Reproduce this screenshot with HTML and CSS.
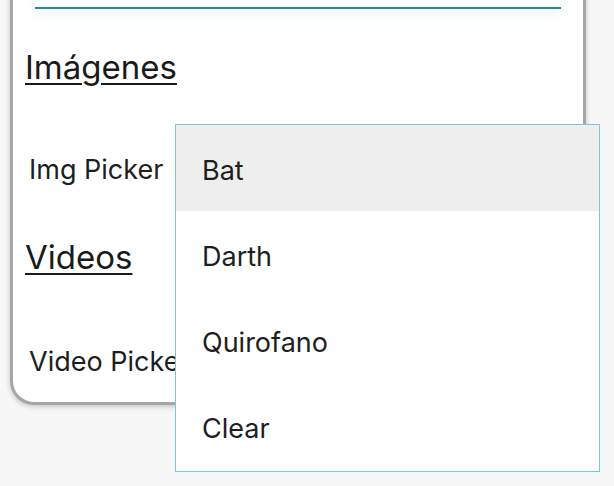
FILE: index.html
```html
<!DOCTYPE html>
<html lang="es">
<head>
<meta charset="utf-8">
<link rel="stylesheet" href="styles.css">
</head>
<body>
<div class="card">
  <div class="field"></div>
  <h2 class="section-title">Imágenes</h2>
  <div class="picker-row">Img Picker</div>
  <h2 class="section-title videos">Videos</h2>
  <div class="picker-row video">Video Picker</div>
</div>
<ul class="dropdown">
  <li class="option selected">Bat</li>
  <li class="option">Darth</li>
  <li class="option">Quirofano</li>
  <li class="option">Clear</li>
</ul>
</body>
</html>
```
FILE: styles.css
```css
html, body {
  margin: 0;
  padding: 0;
}
body {
  background: #f7f7f7;
  font-family: Inter, "Noto Sans", sans-serif;
  color: #1e1e1e;
  width: 614px;
  height: 486px;
  overflow: hidden;
  position: relative;
}
.card {
  margin: -20px 28px 0 10px;
  background: #ffffff;
  border: 3px solid #a6a6a6;
  border-radius: 0 0 24px 24px;
  box-shadow: 0 3px 5px rgba(0,0,0,0.12), -2px 0 4px rgba(0,0,0,0.05), 2px 0 4px rgba(0,0,0,0.05);
  padding: 0 0 10px 0;
  display: flex;
  flex-direction: column;
}
.field {
  height: 24px;
  margin: 0 22px 0 22px;
  border-bottom: 2px solid #2c86a0;
  box-shadow: 0 8px 10px rgba(240,248,250,0.8);
}
.section-title {
  margin: 38px 0 0 12px;
  font-size: 33px;
  font-weight: 400;
  line-height: 40px;
  height: 40px;
  color: #1a1a1a;
  text-decoration: underline;
  text-decoration-thickness: 2px;
  text-underline-offset: 4px;
}
.section-title.videos {
  margin-top: 37px;
}
.picker-row {
  margin: 53px 0 0 16px;
  height: 60px;
  line-height: 60px;
  font-size: 27px;
  white-space: nowrap;
}
.picker-row.video {
  margin-top: 55px;
}
.dropdown {
  position: absolute;
  left: 175px;
  top: 124px;
  width: 423px;
  margin: 0;
  padding: 0 0 2px 0;
  list-style: none;
  background: #ffffff;
  border: 1px solid #79c6df;
}
.option {
  height: 80px;
  padding-top: 6px;
  line-height: 80px;
  padding-left: 26px;
  font-size: 27px;
  color: #1e1e1e;
}
.option.selected {
  background: #eeeeee;
}
```
